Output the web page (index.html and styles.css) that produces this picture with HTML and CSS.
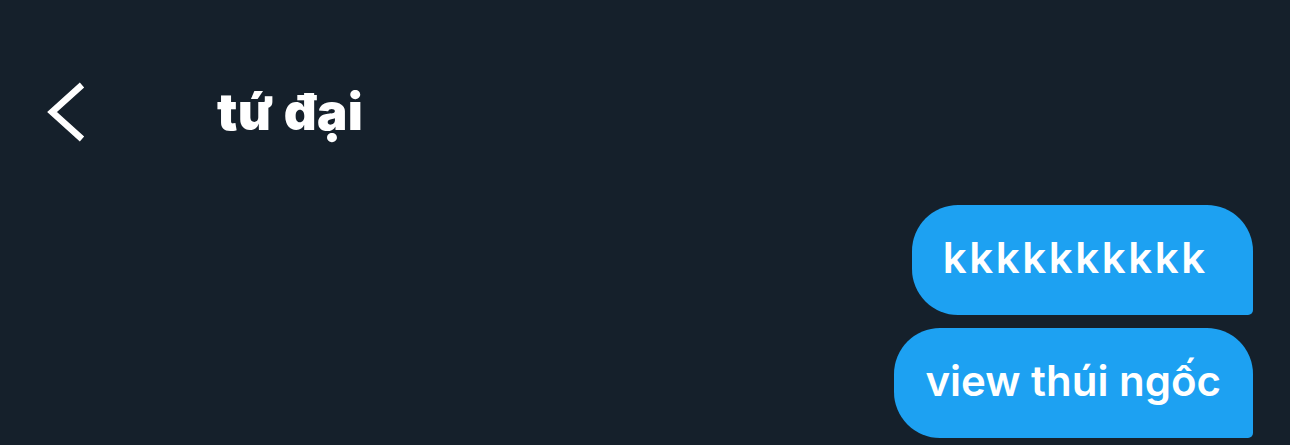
FILE: index.html
```html
<!DOCTYPE html>
<html lang="vi">
<head>
    <meta charset="UTF-8">
    <meta name="viewport" content="width=device-width, initial-scale=1.0">
    <title>tứ đại</title>
    <link rel="stylesheet" href="styles.css">
</head>
<body>
    <div class="screen">
        <header class="header">
            <button class="back" aria-label="Quay lại">
                <svg width="40" height="62" viewBox="0 0 40 62">
                    <path d="M37 4 L7 31 L37 58" fill="none" stroke="#fff" stroke-width="6.5" stroke-linejoin="miter"/>
                </svg>
            </button>
            <h1 class="title">tứ đại</h1>
        </header>

        <div class="messages">
            <div class="bubble bubble-wide">kkkkkkkkkk&nbsp;</div>
            <div class="bubble">view thúi ngốc</div>
        </div>
    </div>
</body>
</html>
```

FILE: styles.css
```css
/* Màn hình tin nhắn */
* {
    margin: 0;
    padding: 0;
    box-sizing: border-box;
}

body {
    font-family: Inter, "Noto Sans", sans-serif;
    background-color: #15202b;
    color: #fff;
    height: 100vh;
    overflow: hidden;
}

.screen {
    display: flex;
    flex-direction: column;
}

.header {
    display: flex;
    align-items: center;
    padding: 81px 0 0 45px;
    height: 143px;
}

.back {
    background: none;
    border: none;
    width: 40px;
    height: 62px;
    cursor: pointer;
}

.back svg {
    display: block;
}

.title {
    margin-left: 132px;
    font-size: 51px;
    font-weight: 900;
    line-height: 62px;
    letter-spacing: 0.3px;
}

.messages {
    display: flex;
    flex-direction: column;
    align-items: flex-end;
    gap: 13px;
    padding: 62px 37px 0 0;
}

.bubble {
    background-color: #1da1f2;
    font-size: 42px;
    font-weight: 600;
    line-height: 50px;
    padding: 28px 32px 32px 31px;
    border-radius: 46px 46px 5px 46px;
    white-space: nowrap;
}

.bubble-wide {
    letter-spacing: 2.6px;
}
```
